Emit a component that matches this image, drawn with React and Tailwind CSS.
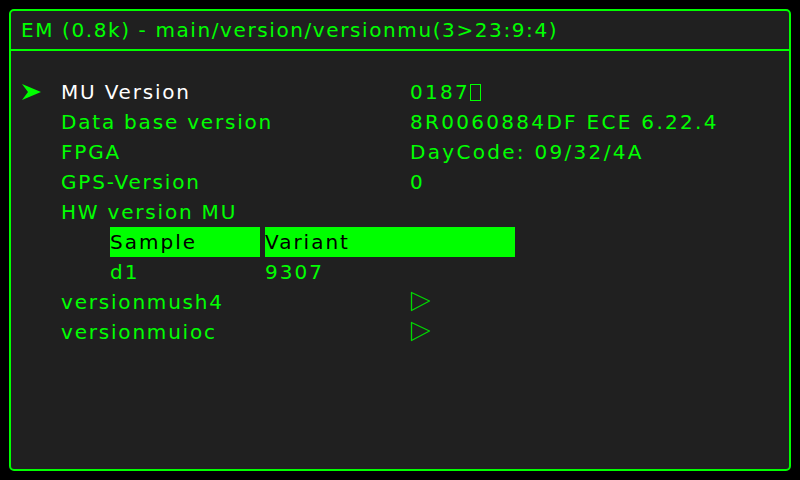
const font = { fontFamily: '"DejaVu Sans", sans-serif' }

function Pointer() {
  return (
    <svg width="20" height="18" viewBox="0 0 20 18" className="block">
      <path d="M0 1 L19 9 L0 17 L6 9 Z" fill="#00ff00" />
    </svg>
  )
}

function Play() {
  return (
    <svg width="22" height="22" viewBox="0 0 22 22" className="block">
      <path d="M1.5 1.5 L19.5 10 L1.5 19.5 Z" fill="none" stroke="#00d800" strokeWidth="1.3" strokeLinejoin="round" />
    </svg>
  )
}

const rows = [
  { label: 'MU Version', value: '0187', selected: true, tofu: true },
  { label: 'Data base version', value: '8R0060884DF ECE 6.22.4' },
  { label: 'FPGA', value: 'DayCode: 09/32/4A' },
  { label: 'GPS-Version', value: '0' },
  { label: 'HW version MU', value: '' },
]

function Row({ label, value, selected, tofu, children }) {
  return (
    <div className="flex items-center h-[30px]">
      <div className="w-[39px] flex items-center">{selected && <Pointer />}</div>
      <div className={`w-[349px] tracking-[1.8px] ${selected ? 'text-white' : 'text-[#00ff00]'}`}>{label}</div>
      <div className="flex items-center text-[#00ff00] tracking-[2.3px]">
        {value}
        {tofu && <span className="inline-block w-[11px] h-[17px] border border-[#00ff00]" />}
        {children}
      </div>
    </div>
  )
}

export default function App() {
  return (
    <div className="w-[800px] h-[480px] bg-black p-[9px]" style={font}>
      <div className="h-full border-2 border-[#00ff00] rounded-[5px] bg-[#202020] flex flex-col text-[20px]">
        <div className="h-[40px] border-b-2 border-[#00ff00] flex items-center pl-[10px] text-[#00ff00] tracking-[1.6px]">
          EM (0.8k) - main/version/versionmu(3&gt;23:9:4)
        </div>
        <div className="pt-[26px] pl-[11px]">
          {rows.map((r) => (
            <Row key={r.label} {...r} />
          ))}
          <div className="flex items-center h-[30px] pl-[88px] gap-[5px] text-black tracking-[2px]">
            <div className="w-[150px] h-[30px] bg-[#00ff00] flex items-center">Sample</div>
            <div className="w-[250px] h-[30px] bg-[#00ff00] flex items-center">Variant</div>
          </div>
          <div className="flex items-center h-[30px] pl-[88px] gap-[5px] text-[#00ff00] tracking-[2px]">
            <div className="w-[150px]">d1</div>
            <div className="w-[250px]">9307</div>
          </div>
          <Row label="versionmush4"><Play /></Row>
          <Row label="versionmuioc"><Play /></Row>
        </div>
      </div>
    </div>
  )
}
